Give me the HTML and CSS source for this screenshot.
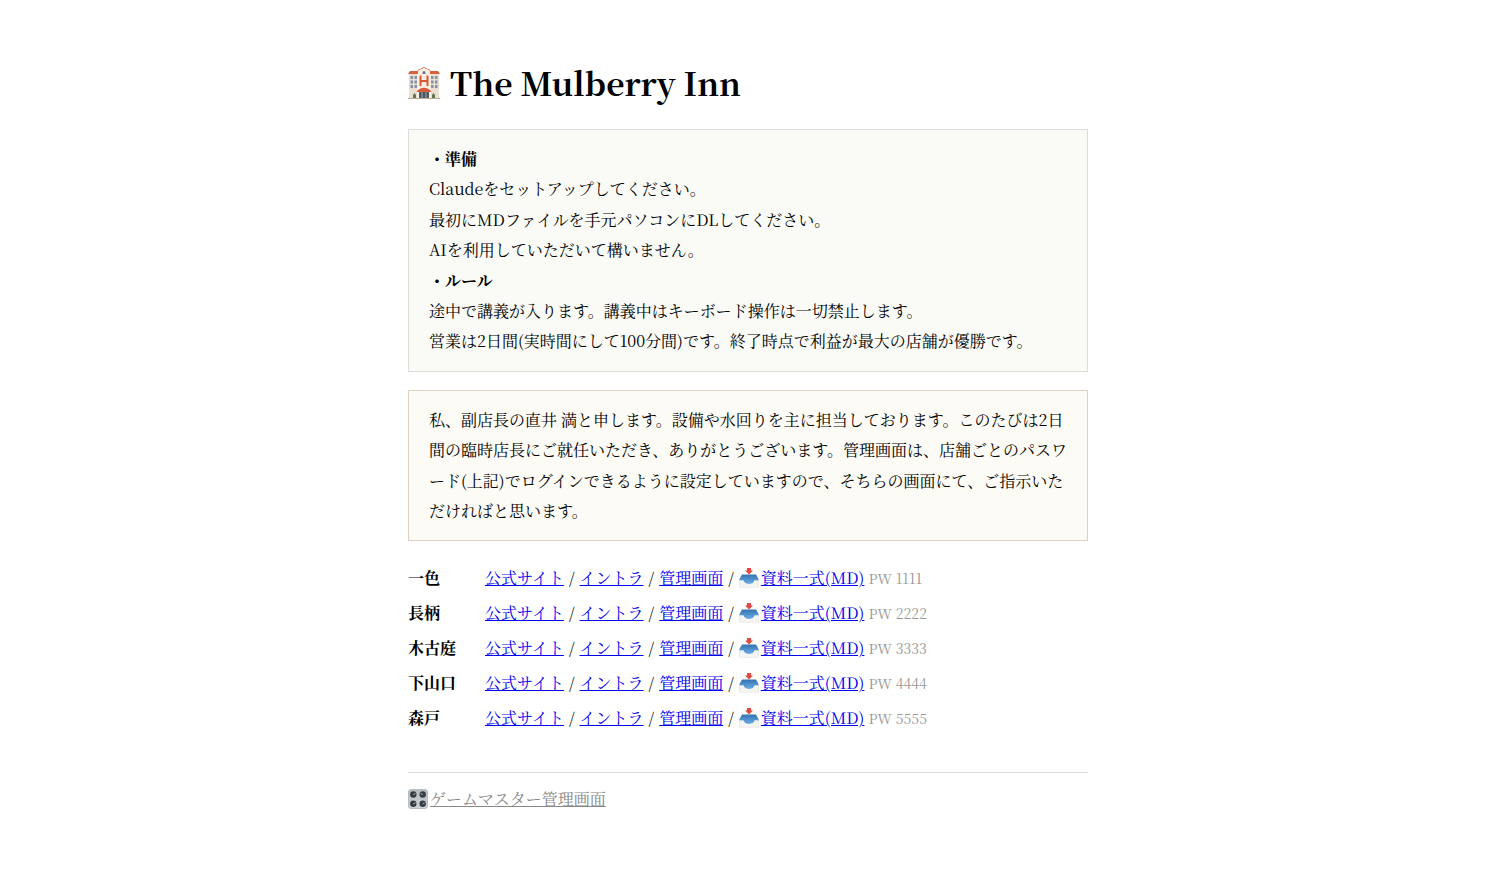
FILE: index.html
```html
<!DOCTYPE html>
<html lang="ja">
<head>
<meta charset="utf-8">
<title>The Mulberry Inn</title>
<link rel="stylesheet" href="styles.css">
</head>
<body>
<svg class="defs" aria-hidden="true">
  <symbol id="hotel" viewBox="0 0 32 32">
    <path d="M1 7h30v24.500H1z" fill="#eadfd0"/>
    <path d="M9 5q0-2 3-2.500Q16-1 20 2.500q3 .5 3 2.500v26H9z" fill="#f8eee1"/>
    <path d="M0 7l2-3h8v3zM22 7V4h8l2 3z" fill="#d9603f"/>
    <path d="M9.500 5q0-2.500 3-3Q16-1 19.500 2q3 .5 3 3" fill="none" stroke="#d58a70"/>
    <path d="M14.500 6q0-2 1.500-2t1.500 2v1h-3z" fill="#60768d"/>
    <path d="M2.500 9H5v3H2.500zM6.500 9H9v3H6.500zM23 9h2.500v3H23zM27 9h2.500v3H27zM2.500 13.500H5v3H2.500zM6.500 13.500H9v3H6.500zM23 13.500h2.500v3H23zM27 13.500h2.500v3H27zM2.500 18H5v3H2.500zM6.500 18H9v3H6.500zM23 18h2.500v3H23zM27 18h2.500v3H27z" fill="#8292a8"/>
    <path d="M12.500 8.500v10.500M19.500 8.500v10.500M12.500 14h7" stroke="#dc5636" stroke-width="2"/>
    <path d="M8.500 25q1-2.500 4-3.500 3.500-1.500 7 0 3 1 4 3.500z" fill="#d85a39"/>
    <path d="M11 25h10v6H11z" fill="#485d6b"/>
    <path d="M14 25v6M18 25v6" stroke="#ae9d8c"/>
    <path d="M5 31v-3l1.500-2L8 28v3zM24 31v-3l1.500-2 1.500 2v3z" fill="#60764b"/>
    <path d="M0 31h32v1H0z" fill="#bda99b"/>
  </symbol>
  <linearGradient id="trayBlue" x2="0" y2="1"><stop stop-color="#3571b0"/><stop offset="1" stop-color="#69aee8"/></linearGradient>
  <linearGradient id="steel" x2="0" y2="1"><stop stop-color="#b4bbc1"/><stop offset="1" stop-color="#d0d4d7"/></linearGradient>
  <symbol id="inbox" viewBox="0 0 20 20">
    <path d="M3 7h14l3 5v6.500q0 1-1 1H1q-1 0-1-1V12z" fill="#e0e0df"/>
    <path d="M3 6.500h14l2.500 4.500v1.500h-4q-1 3.500-5.500 3.500t-5.500-3.500h-4V11z" fill="url(#trayBlue)"/>
    <path d="M.5 12.500h4q1 3.500 5.500 3.500t5.500-3.500h4V19H.5z" fill="#f4f4f3"/>
    <path d="M8 0h4v2.500h2L10 6.500 6 2.500h2z" fill="#e4483f"/>
  </symbol>
  <symbol id="knobs" viewBox="0 0 20 20">
    <rect x=".5" y=".5" width="19" height="19" rx="2.500" fill="url(#steel)" stroke="#b8bdc1"/>
    <g fill="#353c42"><circle cx="5.300" cy="5.500" r="3.200"/><circle cx="14.700" cy="5.500" r="3.200"/><circle cx="5.300" cy="14.800" r="3.200"/><circle cx="14.700" cy="14.800" r="3.200"/></g>
    <path d="M5.300 5.500L7.500 4.500M14.700 5.500L12.500 4.500M5.300 14.800L7.500 13.800M14.700 14.800L16.700 13.800" stroke="#aab2b8"/>
  </symbol>
</svg>
<main class="page">
  <h1 class="title"><svg class="hotel" aria-hidden="true"><use href="#hotel"/></svg>The Mulberry Inn</h1>

  <section class="box rules">
    <strong>・準備</strong><br>
    Claudeをセットアップしてください。<br>
    最初にMDファイルを手元パソコンにDLしてください。<br>
    AIを利用していただいて構いません。<br>
    <strong>・ルール</strong><br>
    途中で講義が入ります。講義中はキーボード操作は一切禁止します。<br>
    営業は2日間(実時間にして100分間)です。終了時点で利益が最大の店舗が優勝です。
  </section>

  <section class="box message">私、副店長の直井 満と申します。設備や水回りを主に担当しております。このたびは2日間の臨時店長にご就任いただき、ありがとうございます。管理画面は、店舗ごとのパスワード(上記)でログインできるように設定していますので、そちらの画面にて、ご指示いただければと思います。</section>

  <table class="stores">
    <tr><th scope="row">一色</th><td><a href="#">公式サイト</a><span class="slash">/</span><a href="#">イントラ</a><span class="slash">/</span><a href="#">管理画面</a><span class="slash">/</span><a href="#"><svg class="emoji" aria-hidden="true"><use href="#inbox"/></svg>資料一式(MD)</a> <span class="pw">PW 1111</span></td></tr>
    <tr><th scope="row">長柄</th><td><a href="#">公式サイト</a><span class="slash">/</span><a href="#">イントラ</a><span class="slash">/</span><a href="#">管理画面</a><span class="slash">/</span><a href="#"><svg class="emoji" aria-hidden="true"><use href="#inbox"/></svg>資料一式(MD)</a> <span class="pw">PW 2222</span></td></tr>
    <tr><th scope="row">木古庭</th><td><a href="#">公式サイト</a><span class="slash">/</span><a href="#">イントラ</a><span class="slash">/</span><a href="#">管理画面</a><span class="slash">/</span><a href="#"><svg class="emoji" aria-hidden="true"><use href="#inbox"/></svg>資料一式(MD)</a> <span class="pw">PW 3333</span></td></tr>
    <tr><th scope="row">下山口</th><td><a href="#">公式サイト</a><span class="slash">/</span><a href="#">イントラ</a><span class="slash">/</span><a href="#">管理画面</a><span class="slash">/</span><a href="#"><svg class="emoji" aria-hidden="true"><use href="#inbox"/></svg>資料一式(MD)</a> <span class="pw">PW 4444</span></td></tr>
    <tr><th scope="row">森戸</th><td><a href="#">公式サイト</a><span class="slash">/</span><a href="#">イントラ</a><span class="slash">/</span><a href="#">管理画面</a><span class="slash">/</span><a href="#"><svg class="emoji" aria-hidden="true"><use href="#inbox"/></svg>資料一式(MD)</a> <span class="pw">PW 5555</span></td></tr>
  </table>

  <footer class="footer"><a href="#"><svg class="emoji" aria-hidden="true"><use href="#knobs"/></svg>ゲームマスター管理画面</a></footer>
</main>
</body>
</html>
```
FILE: styles.css
```css
body {
  margin: 0;
  background: #fff;
  color: #000;
  font-family: "Noto Serif CJK JP", "Liberation Serif", "Noto Sans CJK JP", serif;
  font-size: 16px;
  line-height: 1.9;
}

.defs {
  position: absolute;
  width: 0;
  height: 0;
}

.page {
  max-width: 680px;
  margin: 0 auto;
  padding: 48px 20px;
}

.title {
  display: flex;
  align-items: center;
  gap: 10px;
  margin: 0 0 12px;
  font-size: 32px;
  line-height: 69px;
}

.hotel {
  width: 32px;
  height: 32px;
}

.box {
  margin-bottom: 18px;
  padding: 14px 18px 14px 20px;
  border: 1px solid;
}

.rules {
  border-color: #ddd;
  background: #fafbf7;
}

.message {
  border-color: #ddd3c4;
  background: #fdfbf6;
}

.stores {
  margin-top: 19px;
  border-collapse: collapse;
  line-height: 35px;
}

.stores th,
.stores td {
  height: 35px;
  padding: 0;
  text-align: left;
  vertical-align: top;
}

.stores th {
  width: 77px;
}

a {
  color: #0000ee;
}

.slash {
  margin: 0 5px;
}

.emoji {
  width: 20px;
  height: 20px;
  margin-right: 2px;
  vertical-align: -4px;
}

.pw {
  color: #999;
  font-size: 14px;
  line-height: 1;
}

.footer {
  margin-top: 37px;
  padding-top: 11px;
  border-top: 1px solid #ddd;
}

.footer a {
  color: #888;
}
```
